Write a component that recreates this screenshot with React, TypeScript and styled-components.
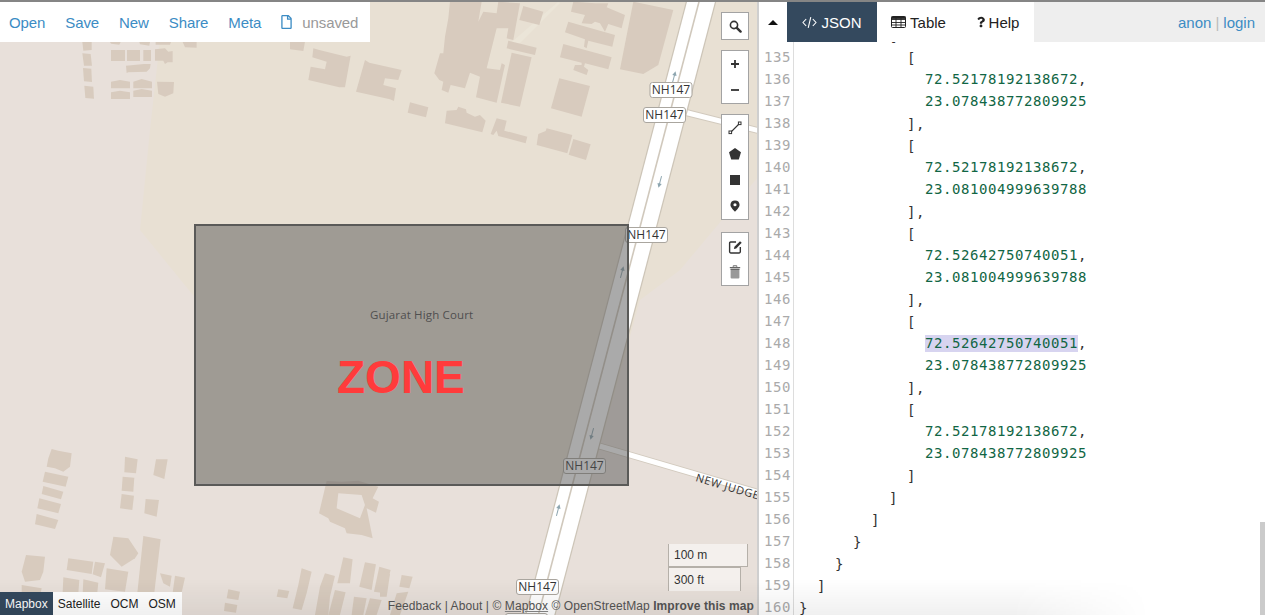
import React from "react";
import styled, { createGlobalStyle } from "styled-components";
import { FaQuestion, FaRegFile } from "react-icons/fa";

const GlobalStyle = createGlobalStyle`
  html, body {
    margin: 0;
    height: 100%;
    overflow: hidden;
    background: #fff;
  }
  #root {
    height: 100%;
  }
`;

const SANS = `"Liberation Sans", Arial, sans-serif`;

const Wrapper = styled.div`
  position: relative;
  box-sizing: border-box;
  height: 100vh;
  display: flex;
  border-top: 2px solid #858585;
  font-family: ${SANS};
  overflow: hidden;
`;

const BottomShade = styled.div`
  position: absolute;
  left: 0;
  bottom: 0;
  width: 1150px;
  height: 36px;
  pointer-events: none;
  background: linear-gradient(rgba(0, 0, 0, 0), rgba(0, 0, 0, 0.06));
  mask-image: linear-gradient(to right, #000 88%, transparent);
  z-index: 5;
`;

/* ---------- map side ---------- */

const MapPane = styled.div`
  position: relative;
  width: 757px;
  flex: none;
  overflow: hidden;
  background: #e8e0da;
`;

const MapDrawing = styled.svg`
  display: block;
`;

const TopMenu = styled.div`
  position: absolute;
  top: 0;
  left: 0;
  width: 370px;
  height: 40px;
  box-sizing: border-box;
  padding-left: 9px;
  display: flex;
  align-items: center;
  gap: 20px;
  background: #fff;
  font-size: 15px;
  letter-spacing: -0.1px;
`;

const MenuLink = styled.a`
  color: #3c8cc4;
  cursor: pointer;
`;

const FileStatus = styled.span`
  display: flex;
  align-items: center;
  gap: 10px;
  color: #999;

  svg {
    color: #3c8cc4;
    width: 11px;
    height: 14px;
  }
`;

const Controls = styled.div`
  position: absolute;
  top: 10px;
  left: 721px;
  display: flex;
  flex-direction: column;
  gap: 10px;
`;

const ControlGroup = styled.div<{ $apart?: boolean }>`
  display: flex;
  flex-direction: column;
  width: 26px;
  margin-top: ${({ $apart }) => ($apart ? 2 : 0)}px;
  background: #fff;
  border: 1px solid #a3a3a3;
`;

const ControlButton = styled.button`
  width: 26px;
  height: 26px;
  padding: 0;
  border: 0;
  background: transparent;
  display: flex;
  align-items: center;
  justify-content: center;
`;

const LayerSwitch = styled.div`
  position: absolute;
  left: 0;
  bottom: 0;
  height: 23px;
  padding-right: 1px;
  display: flex;
  align-items: center;
  background: #fff;
  font-size: 12px;
`;

const LayerButton = styled.span<{ $active?: boolean }>`
  height: 100%;
  display: flex;
  align-items: center;
  padding: 0 5px;
  color: ${({ $active }) => ($active ? "#fff" : "#222")};
  background: ${({ $active }) => ($active ? "#34495e" : "transparent")};
`;

const ScaleBox = styled.div`
  position: absolute;
  left: 668px;
  bottom: 24px;
  display: flex;
  flex-direction: column;
  font-size: 12px;
  color: #333;
`;

const ScaleRow = styled.div<{ $width: number; $flip?: boolean }>`
  box-sizing: border-box;
  width: ${({ $width }) => $width}px;
  height: ${({ $flip }) => ($flip ? 24 : 23)}px;
  padding-left: 5px;
  display: flex;
  align-items: center;
  background: rgba(255, 255, 255, 0.5);
  border-left: 1px solid #b5b0a9;
  border-right: 1px solid #b5b0a9;
  ${({ $flip }) =>
    $flip ? "border-top: 1px solid #b5b0a9;" : "border-bottom: 1px solid #b5b0a9;"}
`;

const Attribution = styled.div`
  position: absolute;
  right: 3px;
  bottom: 0;
  line-height: 18px;
  font-size: 12px;
  letter-spacing: 0.09px;
  color: #555;
  white-space: nowrap;
`;

const Underlined = styled.span`
  text-decoration: underline;
  text-decoration-color: #888;
`;

/* ---------- editor side ---------- */

const EditorPane = styled.div`
  flex: 1;
  min-width: 0;
  display: flex;
  flex-direction: column;
  border-left: 2px solid #cfcfcf;
  position: relative;
`;

const Header = styled.div`
  height: 40px;
  flex: none;
  display: flex;
  background: #eee;
  font-size: 15px;
  position: relative;
  z-index: 2;
`;

const Tab = styled.div<{ $width: number; $inset?: number; $active?: boolean }>`
  box-sizing: border-box;
  width: ${({ $width }) => $width}px;
  padding-left: ${({ $inset }) => $inset ?? 0}px;
  display: flex;
  align-items: center;
  justify-content: center;
  gap: 4px;
  color: ${({ $active }) => ($active ? "#fff" : "#222")};
  background: ${({ $active }) => ($active ? "#34495e" : "#fff")};
`;

const Caret = styled.span`
  width: 0;
  height: 0;
  border-left: 5px solid transparent;
  border-right: 5px solid transparent;
  border-bottom: 5px solid #111;
`;

const Login = styled.div`
  margin-left: auto;
  padding-right: 10px;
  display: flex;
  align-items: center;
  gap: 4px;
  color: #3c8cc4;
`;

const Pipe = styled.span`
  color: #bbb;
`;

const CodeView = styled.div`
  flex: 1;
  overflow: hidden;
  position: relative;
`;

const CodeLines = styled.div`
  margin-top: -18px;
  font-family: "DejaVu Sans Mono", monospace;
  font-size: 14px;
  line-height: 22px;
  letter-spacing: 0.57px;
`;

const CodeRow = styled.div`
  display: flex;
  height: 22px;
`;

const LineNumber = styled.span`
  width: 35px;
  flex: none;
  box-sizing: border-box;
  padding-left: 5px;
  color: #aaa;
  border-right: 1px solid #ddd;
`;

const CodeText = styled.span`
  padding-left: 5px;
  white-space: pre;
  color: #333;
`;

const Bracket = styled.span`
  position: relative;
  top: 1px;
`;

const NumberToken = styled.span<{ $selected?: boolean }>`
  color: #116644;
  display: inline-block;
  line-height: 17px;
  height: 17px;
  background: ${({ $selected }) => ($selected ? "#d7d4f0" : "transparent")};
`;

const ScrollThumb = styled.div`
  position: absolute;
  right: 0;
  top: 480px;
  bottom: 0;
  width: 5px;
  background: #cbcbcb;
`;

type Line = [number, number, string, string?, boolean?];

const LINES: Line[] = [
  [134, 10, "["],
  [135, 12, "["],
  [136, 14, "", "72.52178192138672,"],
  [137, 14, "", "23.078438772809925"],
  [138, 12, "],"],
  [139, 12, "["],
  [140, 14, "", "72.52178192138672,"],
  [141, 14, "", "23.081004999639788"],
  [142, 12, "],"],
  [143, 12, "["],
  [144, 14, "", "72.52642750740051,"],
  [145, 14, "", "23.081004999639788"],
  [146, 12, "],"],
  [147, 12, "["],
  [148, 14, "", "72.52642750740051,", true],
  [149, 14, "", "23.078438772809925"],
  [150, 12, "],"],
  [151, 12, "["],
  [152, 14, "", "72.52178192138672,"],
  [153, 14, "", "23.078438772809925"],
  [154, 12, "]"],
  [155, 10, "]"],
  [156, 8, "]"],
  [157, 6, "}"],
  [158, 4, "}"],
  [159, 2, "]"],
  [160, 0, "}"],
];

/* traced in crop coordinates, 3x the page, each group has its own offset */
const BUILDINGS_TOP = [
  "510,5 605,5 595,65 610,35 650,40 655,5 720,10 700,120 680,115 685,85 650,85 620,205 660,210 665,190 675,195 650,308 588,292 600,230 570,218 555,265 512,255 505,278 485,270 490,245 478,240 463,220 480,160 490,160 495,110 505,55",
  "730,18 790,35 778,75 718,60",
  "685,122 770,143 765,165 680,145",
  "695,158 755,172 720,320 663,308",
  "880,5 945,10 985,10 980,22 1035,45 1025,85 985,72 975,95 960,70 945,65 935,72 905,70 915,45 873,35",
  "865,65 1005,105 997,140 925,122 920,145 912,140 915,118 855,97",
  "850,132 995,172 985,208 915,190 912,200 925,210 920,225 880,210 885,195 905,195 905,188 840,172",
  "838,235 930,258 905,350 813,325",
  "1060,5 1180,30 1135,195 1090,222 1020,208",
  "30,125 75,125 70,153 30,148",
  "100,145 118,150 200,170 212,167 195,262 178,262 85,240 92,200 135,208 140,185 97,172",
  "255,180 268,188 365,210 355,240 315,235 310,255 348,265 342,303 330,298 228,275",
  "390,307 445,322 438,352 383,338",
  "500,332 530,330 535,320 558,328 560,338 585,350 600,345 617,362 607,397 495,370",
  "650,355 680,362 673,392 742,410 737,430 655,408 650,392 640,405 632,402",
  "775,402 797,393 800,385 877,405 862,460 770,435",
  "880,417 932,433 918,480 866,464",
];

const BUILDINGS_LEFT = [
  "247,36 275,36 275,60 250,62",
  "247,70 272,72 276,107 252,107",
  "249,114 274,116 276,156 252,154",
  "253,167 280,170 282,206 256,204",
  "333,60 375,60 375,93 333,93",
  "381,60 420,60 420,93 381,93",
  "430,60 453,60 453,93 430,93",
  "465,58 495,55 505,65 518,63 518,97 503,97 495,102 490,92 465,92",
  "378,107 432,102 452,102 450,115 440,125 385,127 380,129",
  "333,155 360,150 390,155 390,175 333,175",
  "333,187 360,182 390,187 390,207 333,207",
  "400,155 425,147 456,155 456,175 400,175",
  "400,182 425,177 456,182 456,201 400,201",
  "471,155 522,156 520,190 495,200 475,192",
  "330,36 362,36 358,44 333,41",
  "418,36 450,36 448,47 420,43",
  "467,36 513,36 510,44 467,44",
  "548,36 590,36 590,53 555,52",
];

const BUILDINGS_BOTTOM = [
  "155,57 175,62 215,70 210,110 190,125 165,115 140,110 145,85",
  "135,125 205,140 197,170 128,155",
  "130,168 190,185 183,208 125,192",
  "118,205 183,222 175,250 112,235",
  "110,252 175,270 165,297 105,283",
  "375,80 413,88 408,130 373,127",
  "368,140 403,143 400,185 365,182",
  "365,192 402,197 397,240 360,235",
  "468,88 503,88 493,147 460,135",
  "437,207 477,210 470,260 433,250",
  "78,375 135,380 130,425 120,450 75,455 65,425",
  "65,465 125,475 120,500 65,500",
  "205,385 280,395 275,432 200,420",
  "285,395 315,400 303,442 278,433",
  "340,320 385,325 415,370 405,385 365,410 330,375",
  "430,318 482,328 455,555 405,555",
  "320,415 385,425 375,485 315,478",
  "190,442 238,450 230,555 185,555",
  "250,448 295,458 285,555 245,555",
  "480,430 515,437 510,470 490,460",
  "525,437 555,443 540,510 515,510",
  "685,478 720,485 715,510 680,505",
  "675,518 712,525 708,548 672,543",
  "835,478 868,483 862,505 830,500",
  "905,415 935,425 920,490 905,540 878,535 895,465",
  "975,430 1005,438 990,500 985,555 945,555 960,470",
  "1030,382 1058,388 1050,460 1012,460",
  "1095,397 1128,403 1115,480 1078,470",
  "1138,410 1172,420 1155,490 1122,485",
  "1005,480 1037,487 1020,555 985,555",
  "1062,500 1100,505 1090,555 1055,555",
  "1110,505 1145,510 1130,555 1095,555",
];

const BUILDINGS_CORNER = [
  "0,415 30,432 20,500 0,500",
  "65,435 98,440 88,475 58,470",
  "50,490 85,485 60,555 30,555",
];

const SHIELDS: [number, number][] = [
  [649.5, 82],
  [643, 107],
  [625, 227],
  [563, 458],
  [516, 579],
  [505, 613],
];

const ARROWS: [number, number, boolean][] = [
  [674, 77, true],
  [660, 182, false],
  [622, 272, true],
  [592, 434, false],
  [558, 510, true],
];

const Shield = ({ x, y }: { x: number; y: number }) => (
  <g>
    <rect x={x + 0.5} y={y + 0.5} width="42" height="15" rx="2.5" fill="#fff" stroke="#aaa69f" />
    <text x={x + 21.5} y={y + 12} textAnchor="middle" fontFamily='"Open Sans", sans-serif' fontSize="12" fill="#333">
      NH147
    </text>
  </g>
);

const RoadArrow = ({ x, y, up }: { x: number; y: number; up: boolean }) => (
  <g transform={`translate(${x} ${y}) rotate(${up ? 15 : 195})`} stroke="#8ea6b0" fill="#8ea6b0">
    <line x1="0" y1="6" x2="0" y2="-3" strokeWidth="1" />
    <polygon points="0,-6 2.2,-1.5 -2.2,-1.5" stroke="none" />
  </g>
);

const MapArt = () => (
  <MapDrawing width="757" height="613" viewBox="0 2 757 613">
    <polygon
      points="168,0 160,40 150,130 140,230 197,300 197,483 590,483 640,300 680,270 758,177 758,0"
      fill="#e8e0d3"
    />
    <polygon points="558,2 560,3 513,50 507,46" fill="#ebe5d8" />
    <g fill="#d8cbbe">
      <g transform="translate(280 0) scale(0.3333)">
        {BUILDINGS_TOP.map((p) => (
          <polygon key={p} points={p} />
        ))}
      </g>
      <g transform="translate(0 30) scale(0.3333)">
        {BUILDINGS_LEFT.map((p) => (
          <polygon key={p} points={p} />
        ))}
      </g>
      <g transform="translate(0 430) scale(0.3333)">
        {BUILDINGS_BOTTOM.map((p) => (
          <polygon key={p} points={p} />
        ))}
        <path
          fillRule="evenodd"
          d="M980 153L1025 155L1075 152L1135 170L1118 205L1137 215L1128 248L1100 235L1118 325L1085 315L1040 310L1035 295L990 275L985 265L957 250ZM1015 190L1085 195L1095 225L1080 265L1010 235Z"
        />
      </g>
      <g transform="translate(380 430) scale(0.3333)">
        {BUILDINGS_CORNER.map((p) => (
          <polygon key={p} points={p} />
        ))}
      </g>
    </g>

    {/* side roads */}
    <g fill="none" strokeLinecap="butt">
      <line x1="680" y1="111" x2="760" y2="131" stroke="#d2cabe" strokeWidth="7" />
      <line x1="680" y1="111" x2="760" y2="131" stroke="#fff" strokeWidth="5" />
      <line x1="596" y1="445" x2="760" y2="493" stroke="#d2cabe" strokeWidth="7" />
      <line x1="596" y1="445" x2="760" y2="493" stroke="#fff" strokeWidth="5" />
    </g>

    {/* NH147 carriageways */}
    <line x1="702" y1="-2" x2="539" y2="620" stroke="#cdc5b8" strokeWidth="29.5" />
    <line x1="702" y1="-2" x2="539" y2="620" stroke="#fff" strokeWidth="27" />
    <line x1="700" y1="-2" x2="537" y2="620" stroke="#d0c8bc" strokeWidth="1.6" />

    {ARROWS.map(([x, y, up]) => (
      <RoadArrow key={y} x={x} y={y} up={up} />
    ))}

    <text x="370" y="319" fontFamily='"Open Sans", sans-serif' fontSize="11.5" letterSpacing="0.15" fill="#484848">
      Gujarat High Court
    </text>
    <text
      transform="translate(695 481) rotate(16.5)"
      fontFamily='"Open Sans", sans-serif'
      fontSize="11"
      letterSpacing="0.6"
      fill="#333"
    >
      NEW JUDGES
    </text>

    {SHIELDS.map(([x, y]) => (
      <Shield key={y} x={x} y={y} />
    ))}

    {/* the drawn polygon sits on top of the base map */}
    <rect x="195" y="225" width="433" height="260" fill="#555" fillOpacity="0.5" stroke="#5a5a58" strokeWidth="2" />
    <text x="337" y="393" fontFamily={SANS} fontWeight="700" fontSize="46" fill="#ff3b3b">
      ZONE
    </text>
  </MapDrawing>
);

const SearchIcon = () => (
  <svg width="13" height="13" viewBox="0 0 13 13">
    <circle cx="5" cy="5" r="3.6" fill="none" stroke="#333" strokeWidth="1.6" />
    <line x1="7.8" y1="7.8" x2="11.6" y2="11.6" stroke="#333" strokeWidth="2.4" strokeLinecap="round" />
  </svg>
);

const PlusIcon = () => (
  <svg width="12" height="12" viewBox="0 0 12 12">
    <path d="M6 2v8M2 6h8" stroke="#333" strokeWidth="1.8" />
  </svg>
);

const MinusIcon = () => (
  <svg width="12" height="12" viewBox="0 0 12 12">
    <path d="M2 6h8" stroke="#333" strokeWidth="1.8" />
  </svg>
);

const LineIcon = () => (
  <svg width="14" height="14" viewBox="0 0 14 14">
    <line x1="2.5" y1="11.5" x2="11.5" y2="2.5" stroke="#333" strokeWidth="1.1" />
    <rect x="1" y="10" width="2.6" height="2.6" fill="#fff" stroke="#333" />
    <rect x="10.4" y="1" width="2.6" height="2.6" fill="#fff" stroke="#333" />
  </svg>
);

const PentagonIcon = () => (
  <svg width="14" height="14" viewBox="0 0 14 14">
    <polygon points="7,1 13,5.3 10.8,12.6 3.2,12.6 1,5.3" fill="#333" />
  </svg>
);

const SquareIcon = () => (
  <svg width="12" height="12" viewBox="0 0 12 12">
    <rect x="1" y="1" width="10" height="10" fill="#333" />
  </svg>
);

const MarkerIcon = () => (
  <svg width="10" height="12" viewBox="0 0 12 14">
    <path
      fillRule="evenodd"
      fill="#333"
      d="M6 .5A5.5 5.5 0 0 0 .5 5.6C.5 8.6 4 11.9 6 13.8c2-1.9 5.5-5.2 5.5-8.2A5.5 5.5 0 0 0 6 .5zm0 3.1a1.9 1.9 0 1 1 0 3.8 1.9 1.9 0 0 1 0-3.8z"
    />
  </svg>
);

const EditIcon = () => (
  <svg width="15" height="15" viewBox="0 0 14 14" fill="none">
    <path d="M7.5 2.8H2.5a1 1 0 0 0-1 1V12a1 1 0 0 0 1 1h8a1 1 0 0 0 1-1V7.5" stroke="#333" strokeWidth="1.3" />
    <path d="M5.5 9.4l.5-2.2L11.2 2l1.6 1.6L7.7 8.9z" fill="#333" />
  </svg>
);

const TrashIcon = () => (
  <svg width="12" height="14" viewBox="0 0 12 14">
    <path d="M4.2 1.8V.8h3.6v1" fill="none" stroke="#666" strokeWidth="1" />
    <rect x="0.8" y="2" width="10.4" height="1.2" fill="#666" />
    <path d="M1.6 3.8h8.8v8.6a1 1 0 0 1-1 1H2.6a1 1 0 0 1-1-1z" fill="#999" />
    <rect x="1.6" y="3.8" width="8.8" height="1.2" fill="#666" />
  </svg>
);

const CodeIcon = () => (
  <svg width="15" height="13" viewBox="0 0 15 13" fill="none" stroke="#fff" strokeWidth="1.1">
    <path d="M4.2 3L1 6.5 4.2 10M10.8 3L14 6.5 10.8 10M8.8 1.2L6.2 11.8" />
  </svg>
);

const TableIcon = () => (
  <svg width="15" height="12" viewBox="0 0 15 12" fill="none" stroke="#222">
    <rect x="0.5" y="0.5" width="14" height="11" rx="1" />
    <path d="M0.5 3.5h14M0.5 6.5h14M0.5 9h14M5 1v10.5M10 1v10.5" strokeWidth="0.9" />
    <rect x="0.5" y="0.5" width="14" height="2.4" fill="#222" stroke="none" />
  </svg>
);

const HelpGlyph = styled(FaQuestion)`
  width: 8px;
  height: 12px;
  color: #222;
`;

const App = () => (
  <>
    <GlobalStyle />
    <Wrapper>
      <MapPane>
        <MapArt />
        <TopMenu>
          <MenuLink>Open</MenuLink>
          <MenuLink>Save</MenuLink>
          <MenuLink>New</MenuLink>
          <MenuLink>Share</MenuLink>
          <MenuLink>Meta</MenuLink>
          <FileStatus>
            <FaRegFile />
            unsaved
          </FileStatus>
        </TopMenu>

        <Controls>
          <ControlGroup>
            <ControlButton>
              <SearchIcon />
            </ControlButton>
          </ControlGroup>
          <ControlGroup>
            <ControlButton>
              <PlusIcon />
            </ControlButton>
            <ControlButton>
              <MinusIcon />
            </ControlButton>
          </ControlGroup>
          <ControlGroup>
            <ControlButton>
              <LineIcon />
            </ControlButton>
            <ControlButton>
              <PentagonIcon />
            </ControlButton>
            <ControlButton>
              <SquareIcon />
            </ControlButton>
            <ControlButton>
              <MarkerIcon />
            </ControlButton>
          </ControlGroup>
          <ControlGroup $apart>
            <ControlButton>
              <EditIcon />
            </ControlButton>
            <ControlButton>
              <TrashIcon />
            </ControlButton>
          </ControlGroup>
        </Controls>

        <ScaleBox>
          <ScaleRow $width={80}>100 m</ScaleRow>
          <ScaleRow $width={73} $flip>
            300 ft
          </ScaleRow>
        </ScaleBox>

        <LayerSwitch>
          <LayerButton $active>Mapbox</LayerButton>
          <LayerButton>Satellite</LayerButton>
          <LayerButton>OCM</LayerButton>
          <LayerButton>OSM</LayerButton>
        </LayerSwitch>

        <Attribution>
          Feedback | About | © <Underlined>Mapbox</Underlined> © OpenStreetMap <b>Improve this map</b>
        </Attribution>
      </MapPane>

      <EditorPane>
        <Header>
          <Tab $width={28}>
            <Caret />
          </Tab>
          <Tab $width={90} $active>
            <CodeIcon />
            JSON
          </Tab>
          <Tab $width={79} $inset={4}>
            <TableIcon />
            Table
          </Tab>
          <Tab $width={78} $inset={6}>
            <HelpGlyph />
            Help
          </Tab>
          <Login>
            anon <Pipe>|</Pipe> login
          </Login>
        </Header>

        <CodeView>
          <CodeLines>
            {LINES.map(([n, indent, text, value, selected]) => (
              <CodeRow key={n}>
                <LineNumber>{n}</LineNumber>
                <CodeText>
                  {" ".repeat(indent)}
                  {text && <Bracket>{text}</Bracket>}
                  {value && (
                    <>
                      <NumberToken $selected={selected}>{value.replace(",", "")}</NumberToken>
                      {value.endsWith(",") ? "," : ""}
                    </>
                  )}
                </CodeText>
              </CodeRow>
            ))}
          </CodeLines>
          <ScrollThumb />
        </CodeView>
      </EditorPane>
      <BottomShade />
    </Wrapper>
  </>
);

export default App;
